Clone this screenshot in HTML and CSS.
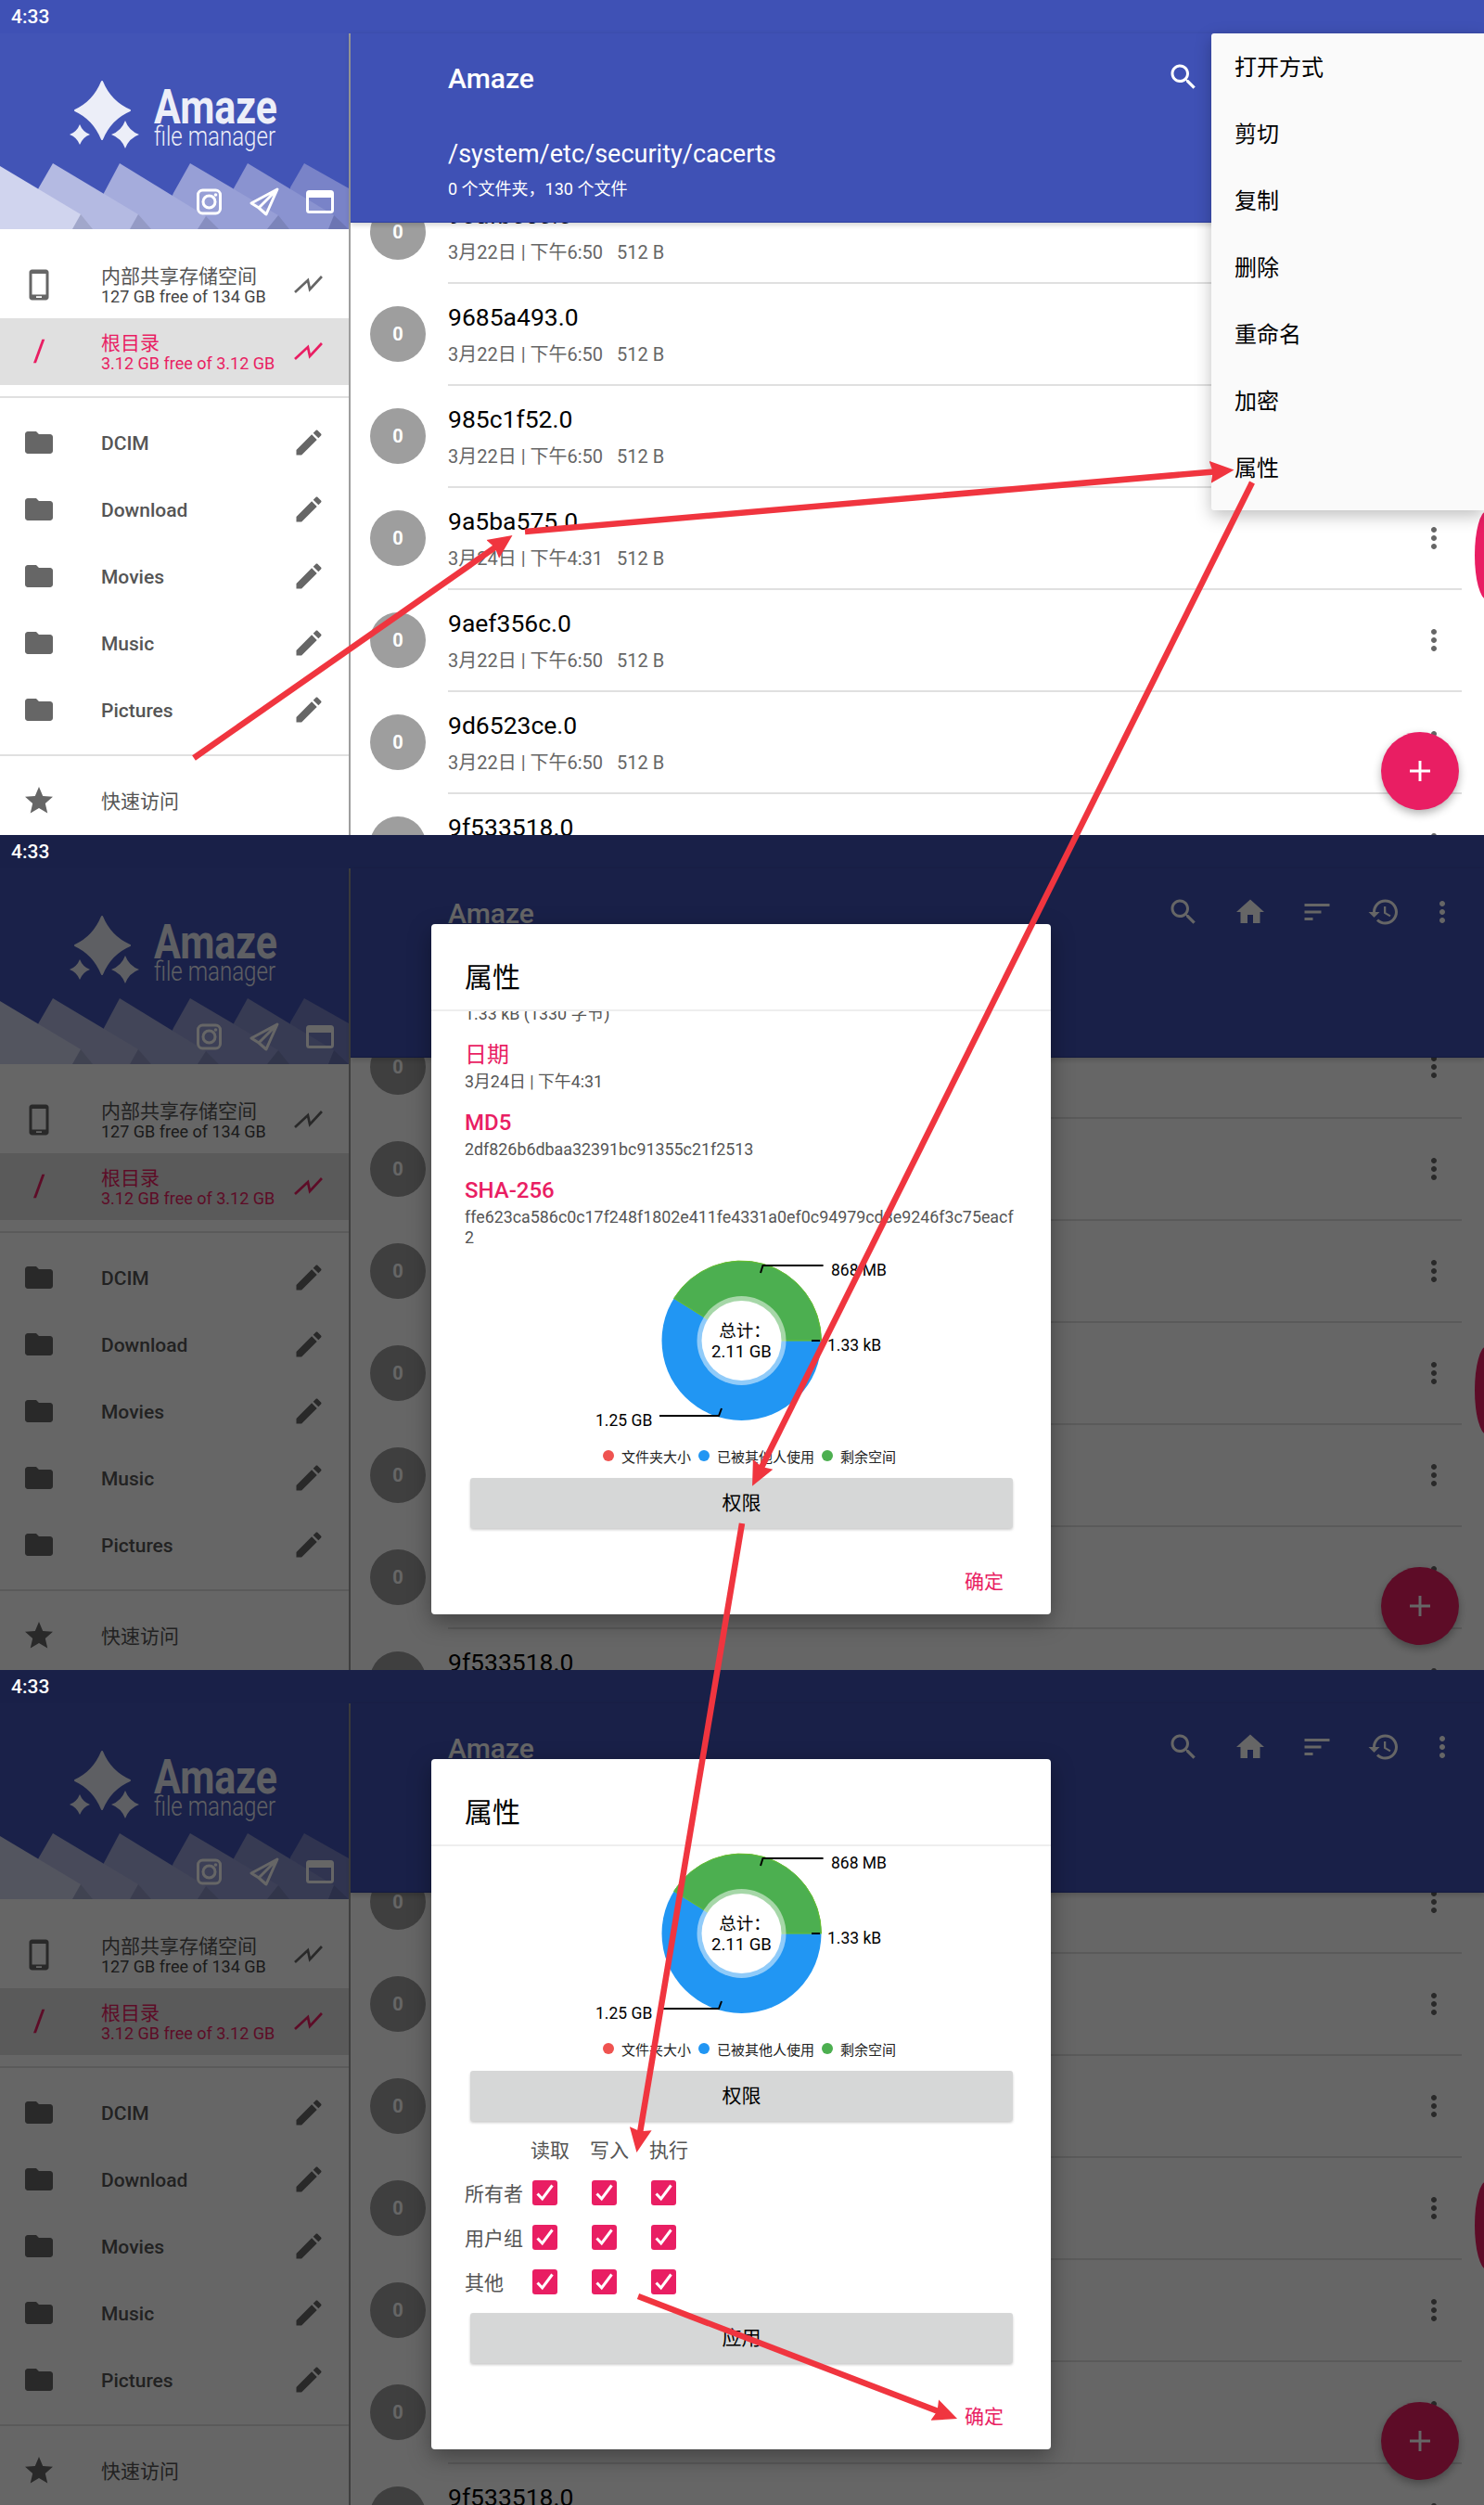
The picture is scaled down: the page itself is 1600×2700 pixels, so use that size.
FILE: index.html
```html
<!DOCTYPE html>
<html lang="zh-CN">
<head>
    <meta charset="UTF-8">
    <title>Amaze 文件属性</title>
    <link rel="stylesheet" href="styles.css">
</head>
<body>

<!-- iconos -->
<svg class="sprites" width="0" height="0">
    <symbol id="i-search" viewBox="0 0 24 24"><path d="M15.5 14h-.79l-.28-.27C15.41 12.59 16 11.11 16 9.5 16 5.91 13.09 3 9.5 3S3 5.91 3 9.5 5.91 16 9.5 16c1.61 0 3.09-.59 4.23-1.57l.27.28v.79l5 4.99L20.49 19l-4.99-5zm-6 0C7.01 14 5 11.99 5 9.5S7.01 5 9.5 5 14 7.01 14 9.5 11.99 14 9.5 14z"/></symbol>
    <symbol id="i-home" viewBox="0 0 24 24"><path d="M10 20v-6h4v6h5v-8h3L12 3 2 12h3v8z"/></symbol>
    <symbol id="i-sort" viewBox="0 0 24 24"><path d="M3 18h6v-2H3v2zM3 6v2h18V6H3zm0 7h12v-2H3v2z"/></symbol>
    <symbol id="i-history" viewBox="0 0 24 24"><path d="M13 3c-4.97 0-9 4.03-9 9H1l3.89 3.89.07.14L9 12H6c0-3.87 3.13-7 7-7s7 3.13 7 7-3.13 7-7 7c-1.93 0-3.68-.79-4.94-2.06l-1.42 1.42C8.27 19.99 10.51 21 13 21c4.97 0 9-4.03 9-9s-4.03-9-9-9zm-1 5v5l4.28 2.54.72-1.21-3.5-2.08V8H12z"/></symbol>
    <symbol id="i-dots" viewBox="0 0 24 24"><path d="M12 8c1.1 0 2-.9 2-2s-.9-2-2-2-2 .9-2 2 .9 2 2 2zm0 2c-1.1 0-2 .9-2 2s.9 2 2 2 2-.9 2-2-.9-2-2-2zm0 6c-1.1 0-2 .9-2 2s.9 2 2 2 2-.9 2-2-.9-2-2-2z"/></symbol>
    <symbol id="i-pencil" viewBox="0 0 24 24"><path d="M3 17.25V21h3.75L17.81 9.94l-3.75-3.75L3 17.25zM20.71 7.04c.39-.39.39-1.02 0-1.41l-2.34-2.34c-.39-.39-1.02-.39-1.41 0l-1.83 1.83 3.75 3.75 1.83-1.83z"/></symbol>
    <symbol id="i-folder" viewBox="0 0 24 24"><path d="M10 4H4c-1.1 0-1.99.9-1.99 2L2 18c0 1.1.9 2 2 2h16c1.1 0 2-.9 2-2V8c0-1.1-.9-2-2-2h-8l-2-2z"/></symbol>
    <symbol id="i-star" viewBox="0 0 24 24"><path d="M12 17.27L18.18 21l-1.64-7.03L22 9.24l-7.19-.61L12 2 9.19 8.63 2 9.24l5.46 4.73L5.82 21z"/></symbol>
    <symbol id="i-phone" viewBox="0 0 24 24"><path fill-rule="evenodd" d="M7 1h10c1.1 0 2 .9 2 2v18c0 1.1-.9 2-2 2H7c-1.1 0-2-.9-2-2V3c0-1.1.9-2 2-2zm0 3v15h10V4H7zm3 16.2v1.2h4v-1.2h-4z"/></symbol>
    <symbol id="i-chart" viewBox="0 0 24 24"><path d="M2 17.300L11.300 8.700L12.700 15.300L21.300 6" fill="none" stroke="currentColor" stroke-width="1.800"/></symbol>
    <symbol id="i-slash" viewBox="0 0 24 24"><path d="M8 20.200L14.200 3.200h2L10 20.200z"/></symbol>
    <symbol id="i-plus" viewBox="0 0 24 24"><path d="M10.400 0h3.200v10.400H24v3.200H13.600V24h-3.200V13.600H0v-3.200h10.400z"/></symbol>
    <symbol id="i-check" viewBox="0 0 27 27"><path d="M5.500 14.500l5.200 5.500L21.500 5.500" fill="none" stroke="#fff" stroke-width="3"/></symbol>
    <symbol id="drawer-art" viewBox="0 0 376 211">
        <path d="M313 166L328 140L376 167V211H310z" fill="#7983c8"/>
        <path d="M252 167L267 140L360 196L354 211H240z" fill="#8a93d0"/>
        <path d="M187 172L205 140L300 196L288 211H170z" fill="#979fd6"/>
        <path d="M112 172L129 140L222 197L213 211H100z" fill="#a5acdc"/>
        <path d="M42 166L57 140L149 195L140 211H20z" fill="#b4bae2"/>
        <path d="M0 143L87 195L78 211H0z" fill="#d0d4ee"/>
        <path d="M87 195L78 211H100zM149 195L140 211H163zM222 197L213 211H236zM300 196L288 211H312zM360 196L354 211H376z" fill="#000" opacity=".1"/>
        <path d="M110 52Q119 74 140 83Q119 92 110 114Q101 92 81 83Q101 74 110 52Z" fill="#eceef8" stroke="#eceef8" stroke-width="2" stroke-linejoin="round"/>
        <path d="M86 98Q89 106 97 109Q89 112 86 120Q83 112 75 109Q83 106 86 98Z" fill="#eceef8"/>
        <path d="M135 94Q139 105 150 109Q139 113 135 124Q131 113 120 109Q131 105 135 94Z" fill="#eceef8"/>
        <g fill="none" stroke="#fff" stroke-width="3" stroke-linejoin="round">
            <rect x="213.500" y="169" width="24" height="25" rx="5"/>
            <circle cx="225.500" cy="181.500" r="6.500"/>
            <path d="M299 168L271 183L279 188L299 168L287 195L279 188"/>
            <rect x="331.500" y="170.500" width="27" height="22" rx="2"/>
        </g>
        <circle cx="232.500" cy="174" r="1.800" fill="#fff"/>
        <rect x="331" y="170" width="28" height="7" fill="#fff"/>
    </symbol>
    <symbol id="donut" viewBox="0 0 668 206">
        <circle cx="334.500" cy="94" r="86" fill="#2196f3"/>
        <path d="M334.500 94L420.500 94A86 86 0 0 0 261.600 48.400Z" fill="#4caf50" stroke="#6cc02a" stroke-width="1"/>
        <circle cx="334.500" cy="94" r="48" fill="#fff" opacity=".5"/>
        <circle cx="334.500" cy="94" r="43" fill="#fff"/>
        <path d="M355 21L357.500 13H422.600M410 94H419M246 175H310L313 167" fill="none" stroke="#000" stroke-width="2"/>
    </symbol>
</svg>

<!-- pantalla 1: menu del archivo -->
<section class="screen">
    <div class="status"><span class="clock">4:33</span></div>
    <div class="panes">
        <aside class="drawer">
            <div class="drawer-head">
                <svg class="art"><use href="#drawer-art"/></svg>
                <svg class="logo" viewBox="0 0 376 211"><text class="logo-name" x="166" y="97" textLength="133" lengthAdjust="spacingAndGlyphs">Amaze</text><text class="logo-sub" x="166" y="121" textLength="131" lengthAdjust="spacingAndGlyphs">file manager</text></svg>
            </div>
            <div class="nav-group first">
                <div class="nav-item"><svg class="ico"><use href="#i-phone"/></svg><div class="nav-text"><div class="nav-name">内部共享存储空间</div><div class="nav-sub">127 GB free of 134 GB</div></div><svg class="ico"><use href="#i-chart"/></svg></div>
                <div class="nav-item active"><svg class="ico"><use href="#i-slash"/></svg><div class="nav-text"><div class="nav-name">根目录</div><div class="nav-sub">3.12 GB free of 3.12 GB</div></div><svg class="ico"><use href="#i-chart"/></svg></div>
            </div>
            <div class="nav-group">
                <div class="nav-item"><svg class="ico"><use href="#i-folder"/></svg><div class="nav-text nav-label">DCIM</div><svg class="ico"><use href="#i-pencil"/></svg></div>
                <div class="nav-item"><svg class="ico"><use href="#i-folder"/></svg><div class="nav-text nav-label">Download</div><svg class="ico"><use href="#i-pencil"/></svg></div>
                <div class="nav-item"><svg class="ico"><use href="#i-folder"/></svg><div class="nav-text nav-label">Movies</div><svg class="ico"><use href="#i-pencil"/></svg></div>
                <div class="nav-item"><svg class="ico"><use href="#i-folder"/></svg><div class="nav-text nav-label">Music</div><svg class="ico"><use href="#i-pencil"/></svg></div>
                <div class="nav-item"><svg class="ico"><use href="#i-folder"/></svg><div class="nav-text nav-label">Pictures</div><svg class="ico"><use href="#i-pencil"/></svg></div>
            </div>
            <div class="nav-group">
                <div class="nav-item"><svg class="ico"><use href="#i-star"/></svg><div class="nav-text nav-name">快速访问</div></div>
            </div>
        </aside>
        <div class="main">
            <header class="toolbar">
                <div class="toolbar-text">
                    <div class="app-title">Amaze</div>
                    <div class="path">/system/etc/security/cacerts</div>
                    <div class="counts">0 个文件夹，130 个文件</div>
                </div>
                <div class="actions">
                    <svg class="ico"><use href="#i-search"/></svg><svg class="ico"><use href="#i-home"/></svg><svg class="ico"><use href="#i-sort"/></svg><svg class="ico"><use href="#i-history"/></svg><svg class="ico more"><use href="#i-dots"/></svg>
                </div>
            </header>
            <div class="files">
                <div class="file"><div class="avatar">0</div><div class="file-info"><div class="file-text"><div class="file-name">90afb5c6.0</div><div class="file-meta"><span>3月22日 | 下午6:50</span><span>512 B</span></div></div><svg class="ico"><use href="#i-dots"/></svg></div></div>
                <div class="file"><div class="avatar">0</div><div class="file-info"><div class="file-text"><div class="file-name">9685a493.0</div><div class="file-meta"><span>3月22日 | 下午6:50</span><span>512 B</span></div></div><svg class="ico"><use href="#i-dots"/></svg></div></div>
                <div class="file"><div class="avatar">0</div><div class="file-info"><div class="file-text"><div class="file-name">985c1f52.0</div><div class="file-meta"><span>3月22日 | 下午6:50</span><span>512 B</span></div></div><svg class="ico"><use href="#i-dots"/></svg></div></div>
                <div class="file"><div class="avatar">0</div><div class="file-info"><div class="file-text"><div class="file-name">9a5ba575.0</div><div class="file-meta"><span>3月24日 | 下午4:31</span><span>512 B</span></div></div><svg class="ico"><use href="#i-dots"/></svg></div></div>
                <div class="file"><div class="avatar">0</div><div class="file-info"><div class="file-text"><div class="file-name">9aef356c.0</div><div class="file-meta"><span>3月22日 | 下午6:50</span><span>512 B</span></div></div><svg class="ico"><use href="#i-dots"/></svg></div></div>
                <div class="file"><div class="avatar">0</div><div class="file-info"><div class="file-text"><div class="file-name">9d6523ce.0</div><div class="file-meta"><span>3月22日 | 下午6:50</span><span>512 B</span></div></div><svg class="ico"><use href="#i-dots"/></svg></div></div>
                <div class="file"><div class="avatar">0</div><div class="file-info"><div class="file-text"><div class="file-name">9f533518.0</div><div class="file-meta"><span>3月22日 | 下午6:50</span><span>512 B</span></div></div><svg class="ico"><use href="#i-dots"/></svg></div></div>
            </div>
        </div>
    </div>
    <div class="scroll-thumb"></div>
    <div class="fab"><svg class="plus"><use href="#i-plus"/></svg></div>
    <div class="menu">
        <div class="menu-item">打开方式</div>
        <div class="menu-item">剪切</div>
        <div class="menu-item">复制</div>
        <div class="menu-item">删除</div>
        <div class="menu-item">重命名</div>
        <div class="menu-item">加密</div>
        <div class="menu-item">属性</div>
    </div>
</section>

<!-- pantalla 2: dialogo de propiedades -->
<section class="screen">
    <div class="status"><span class="clock">4:33</span></div>
    <div class="panes">
        <aside class="drawer">
            <div class="drawer-head">
                <svg class="art"><use href="#drawer-art"/></svg>
                <svg class="logo" viewBox="0 0 376 211"><text class="logo-name" x="166" y="97" textLength="133" lengthAdjust="spacingAndGlyphs">Amaze</text><text class="logo-sub" x="166" y="121" textLength="131" lengthAdjust="spacingAndGlyphs">file manager</text></svg>
            </div>
            <div class="nav-group first">
                <div class="nav-item"><svg class="ico"><use href="#i-phone"/></svg><div class="nav-text"><div class="nav-name">内部共享存储空间</div><div class="nav-sub">127 GB free of 134 GB</div></div><svg class="ico"><use href="#i-chart"/></svg></div>
                <div class="nav-item active"><svg class="ico"><use href="#i-slash"/></svg><div class="nav-text"><div class="nav-name">根目录</div><div class="nav-sub">3.12 GB free of 3.12 GB</div></div><svg class="ico"><use href="#i-chart"/></svg></div>
            </div>
            <div class="nav-group">
                <div class="nav-item"><svg class="ico"><use href="#i-folder"/></svg><div class="nav-text nav-label">DCIM</div><svg class="ico"><use href="#i-pencil"/></svg></div>
                <div class="nav-item"><svg class="ico"><use href="#i-folder"/></svg><div class="nav-text nav-label">Download</div><svg class="ico"><use href="#i-pencil"/></svg></div>
                <div class="nav-item"><svg class="ico"><use href="#i-folder"/></svg><div class="nav-text nav-label">Movies</div><svg class="ico"><use href="#i-pencil"/></svg></div>
                <div class="nav-item"><svg class="ico"><use href="#i-folder"/></svg><div class="nav-text nav-label">Music</div><svg class="ico"><use href="#i-pencil"/></svg></div>
                <div class="nav-item"><svg class="ico"><use href="#i-folder"/></svg><div class="nav-text nav-label">Pictures</div><svg class="ico"><use href="#i-pencil"/></svg></div>
            </div>
            <div class="nav-group">
                <div class="nav-item"><svg class="ico"><use href="#i-star"/></svg><div class="nav-text nav-name">快速访问</div></div>
            </div>
        </aside>
        <div class="main">
            <header class="toolbar">
                <div class="toolbar-text">
                    <div class="app-title">Amaze</div>
                    <div class="path">/system/etc/security/cacerts</div>
                    <div class="counts">0 个文件夹，130 个文件</div>
                </div>
                <div class="actions">
                    <svg class="ico"><use href="#i-search"/></svg><svg class="ico"><use href="#i-home"/></svg><svg class="ico"><use href="#i-sort"/></svg><svg class="ico"><use href="#i-history"/></svg><svg class="ico more"><use href="#i-dots"/></svg>
                </div>
            </header>
            <div class="files">
                <div class="file"><div class="avatar">0</div><div class="file-info"><div class="file-text"><div class="file-name">90afb5c6.0</div><div class="file-meta"><span>3月22日 | 下午6:50</span><span>512 B</span></div></div><svg class="ico"><use href="#i-dots"/></svg></div></div>
                <div class="file"><div class="avatar">0</div><div class="file-info"><div class="file-text"><div class="file-name">9685a493.0</div><div class="file-meta"><span>3月22日 | 下午6:50</span><span>512 B</span></div></div><svg class="ico"><use href="#i-dots"/></svg></div></div>
                <div class="file"><div class="avatar">0</div><div class="file-info"><div class="file-text"><div class="file-name">985c1f52.0</div><div class="file-meta"><span>3月22日 | 下午6:50</span><span>512 B</span></div></div><svg class="ico"><use href="#i-dots"/></svg></div></div>
                <div class="file"><div class="avatar">0</div><div class="file-info"><div class="file-text"><div class="file-name">9a5ba575.0</div><div class="file-meta"><span>3月24日 | 下午4:31</span><span>512 B</span></div></div><svg class="ico"><use href="#i-dots"/></svg></div></div>
                <div class="file"><div class="avatar">0</div><div class="file-info"><div class="file-text"><div class="file-name">9aef356c.0</div><div class="file-meta"><span>3月22日 | 下午6:50</span><span>512 B</span></div></div><svg class="ico"><use href="#i-dots"/></svg></div></div>
                <div class="file"><div class="avatar">0</div><div class="file-info"><div class="file-text"><div class="file-name">9d6523ce.0</div><div class="file-meta"><span>3月22日 | 下午6:50</span><span>512 B</span></div></div><svg class="ico"><use href="#i-dots"/></svg></div></div>
                <div class="file"><div class="avatar">0</div><div class="file-info"><div class="file-text"><div class="file-name">9f533518.0</div><div class="file-meta"><span>3月22日 | 下午6:50</span><span>512 B</span></div></div><svg class="ico"><use href="#i-dots"/></svg></div></div>
            </div>
        </div>
    </div>
    <div class="scroll-thumb"></div>
    <div class="fab"><svg class="plus"><use href="#i-plus"/></svg></div>
    <div class="scrim"></div>
    <div class="dialog">
        <div class="dialog-title">属性</div>
        <div class="dialog-body">
            <div class="prop-value cut">1.33 kB (1330 字节)</div>
            <div class="prop-label">日期</div>
            <div class="prop-value">3月24日 | 下午4:31</div>
            <div class="prop-label strong">MD5</div>
            <div class="prop-value">2df826b6dbaa32391bc91355c21f2513</div>
            <div class="prop-label strong">SHA-256</div>
            <div class="prop-value">ffe623ca586c0c17f248f1802e411fe4331a0ef0c94979cd8e9246f3c75eacf<br>2</div>
            <div class="chart scrolled">
                <svg class="donut"><use href="#donut"/></svg>
                <svg class="chart-labels" viewBox="0 0 668 206"><text x="431" y="24">868 MB</text><text x="427" y="105">1.33 kB</text><text x="177" y="186">1.25 GB</text><text class="total" x="338" y="90" text-anchor="middle">总计：</text><text class="total" x="334.500" y="112" text-anchor="middle">2.11 GB</text></svg>
            </div>
            <div class="legend"><i class="dot red"></i><span>文件夹大小</span><i class="dot blue"></i><span>已被其他人使用</span><i class="dot green"></i><span>剩余空间</span></div>
            <div class="btn">权限</div>
        </div>
        <div class="dialog-foot">确定</div>
    </div>
</section>

<!-- pantalla 3: permisos -->
<section class="screen">
    <div class="status"><span class="clock">4:33</span></div>
    <div class="panes">
        <aside class="drawer">
            <div class="drawer-head">
                <svg class="art"><use href="#drawer-art"/></svg>
                <svg class="logo" viewBox="0 0 376 211"><text class="logo-name" x="166" y="97" textLength="133" lengthAdjust="spacingAndGlyphs">Amaze</text><text class="logo-sub" x="166" y="121" textLength="131" lengthAdjust="spacingAndGlyphs">file manager</text></svg>
            </div>
            <div class="nav-group first">
                <div class="nav-item"><svg class="ico"><use href="#i-phone"/></svg><div class="nav-text"><div class="nav-name">内部共享存储空间</div><div class="nav-sub">127 GB free of 134 GB</div></div><svg class="ico"><use href="#i-chart"/></svg></div>
                <div class="nav-item active"><svg class="ico"><use href="#i-slash"/></svg><div class="nav-text"><div class="nav-name">根目录</div><div class="nav-sub">3.12 GB free of 3.12 GB</div></div><svg class="ico"><use href="#i-chart"/></svg></div>
            </div>
            <div class="nav-group">
                <div class="nav-item"><svg class="ico"><use href="#i-folder"/></svg><div class="nav-text nav-label">DCIM</div><svg class="ico"><use href="#i-pencil"/></svg></div>
                <div class="nav-item"><svg class="ico"><use href="#i-folder"/></svg><div class="nav-text nav-label">Download</div><svg class="ico"><use href="#i-pencil"/></svg></div>
                <div class="nav-item"><svg class="ico"><use href="#i-folder"/></svg><div class="nav-text nav-label">Movies</div><svg class="ico"><use href="#i-pencil"/></svg></div>
                <div class="nav-item"><svg class="ico"><use href="#i-folder"/></svg><div class="nav-text nav-label">Music</div><svg class="ico"><use href="#i-pencil"/></svg></div>
                <div class="nav-item"><svg class="ico"><use href="#i-folder"/></svg><div class="nav-text nav-label">Pictures</div><svg class="ico"><use href="#i-pencil"/></svg></div>
            </div>
            <div class="nav-group">
                <div class="nav-item"><svg class="ico"><use href="#i-star"/></svg><div class="nav-text nav-name">快速访问</div></div>
            </div>
        </aside>
        <div class="main">
            <header class="toolbar">
                <div class="toolbar-text">
                    <div class="app-title">Amaze</div>
                    <div class="path">/system/etc/security/cacerts</div>
                    <div class="counts">0 个文件夹，130 个文件</div>
                </div>
                <div class="actions">
                    <svg class="ico"><use href="#i-search"/></svg><svg class="ico"><use href="#i-home"/></svg><svg class="ico"><use href="#i-sort"/></svg><svg class="ico"><use href="#i-history"/></svg><svg class="ico more"><use href="#i-dots"/></svg>
                </div>
            </header>
            <div class="files">
                <div class="file"><div class="avatar">0</div><div class="file-info"><div class="file-text"><div class="file-name">90afb5c6.0</div><div class="file-meta"><span>3月22日 | 下午6:50</span><span>512 B</span></div></div><svg class="ico"><use href="#i-dots"/></svg></div></div>
                <div class="file"><div class="avatar">0</div><div class="file-info"><div class="file-text"><div class="file-name">9685a493.0</div><div class="file-meta"><span>3月22日 | 下午6:50</span><span>512 B</span></div></div><svg class="ico"><use href="#i-dots"/></svg></div></div>
                <div class="file"><div class="avatar">0</div><div class="file-info"><div class="file-text"><div class="file-name">985c1f52.0</div><div class="file-meta"><span>3月22日 | 下午6:50</span><span>512 B</span></div></div><svg class="ico"><use href="#i-dots"/></svg></div></div>
                <div class="file"><div class="avatar">0</div><div class="file-info"><div class="file-text"><div class="file-name">9a5ba575.0</div><div class="file-meta"><span>3月24日 | 下午4:31</span><span>512 B</span></div></div><svg class="ico"><use href="#i-dots"/></svg></div></div>
                <div class="file"><div class="avatar">0</div><div class="file-info"><div class="file-text"><div class="file-name">9aef356c.0</div><div class="file-meta"><span>3月22日 | 下午6:50</span><span>512 B</span></div></div><svg class="ico"><use href="#i-dots"/></svg></div></div>
                <div class="file"><div class="avatar">0</div><div class="file-info"><div class="file-text"><div class="file-name">9d6523ce.0</div><div class="file-meta"><span>3月22日 | 下午6:50</span><span>512 B</span></div></div><svg class="ico"><use href="#i-dots"/></svg></div></div>
                <div class="file"><div class="avatar">0</div><div class="file-info"><div class="file-text"><div class="file-name">9f533518.0</div><div class="file-meta"><span>3月22日 | 下午6:50</span><span>512 B</span></div></div><svg class="ico"><use href="#i-dots"/></svg></div></div>
            </div>
        </div>
    </div>
    <div class="scroll-thumb"></div>
    <div class="fab"><svg class="plus"><use href="#i-plus"/></svg></div>
    <div class="scrim"></div>
    <div class="dialog">
        <div class="dialog-title">属性</div>
        <div class="dialog-body">
            <div class="chart">
                <svg class="donut"><use href="#donut"/></svg>
                <svg class="chart-labels" viewBox="0 0 668 206"><text x="431" y="24">868 MB</text><text x="427" y="105">1.33 kB</text><text x="177" y="186">1.25 GB</text><text class="total" x="338" y="90" text-anchor="middle">总计：</text><text class="total" x="334.500" y="112" text-anchor="middle">2.11 GB</text></svg>
            </div>
            <div class="legend"><i class="dot red"></i><span>文件夹大小</span><i class="dot blue"></i><span>已被其他人使用</span><i class="dot green"></i><span>剩余空间</span></div>
            <div class="btn">权限</div>
            <div class="perms">
                <span></span><span class="perm-head">读取</span><span class="perm-head">写入</span><span class="perm-head">执行</span>
                <span class="perm-name">所有者</span><span class="check"><svg><use href="#i-check"/></svg></span><span class="check"><svg><use href="#i-check"/></svg></span><span class="check"><svg><use href="#i-check"/></svg></span>
                <span class="perm-name">用户组</span><span class="check"><svg><use href="#i-check"/></svg></span><span class="check"><svg><use href="#i-check"/></svg></span><span class="check"><svg><use href="#i-check"/></svg></span>
                <span class="perm-name">其他</span><span class="check"><svg><use href="#i-check"/></svg></span><span class="check"><svg><use href="#i-check"/></svg></span><span class="check"><svg><use href="#i-check"/></svg></span>
            </div>
            <div class="btn">应用</div>
        </div>
        <div class="dialog-foot">确定</div>
    </div>
</section>

<!-- flechas rojas de la anotacion -->
<svg class="arrows" viewBox="0 0 1600 2700">
    <defs>
        <marker id="head" markerUnits="userSpaceOnUse" markerWidth="26" markerHeight="26" viewBox="0 0 26 26" refX="16" refY="13" orient="auto">
            <path d="M0 1L26 13L0 25L3 13z" fill="#f0353f"/>
        </marker>
    </defs>
    <g stroke="#f0353f" stroke-width="6.500">
        <line x1="209" y1="817" x2="544.300" y2="582.700" marker-end="url(#head)"/>
        <line x1="566" y1="573" x2="1320.600" y2="507.400" marker-end="url(#head)"/>
        <line x1="1350" y1="520" x2="815.500" y2="1592.700" marker-end="url(#head)"/>
        <line x1="800" y1="1642" x2="688.100" y2="2310.100" marker-end="url(#head)"/>
        <line x1="688" y1="2475" x2="1022.700" y2="2603.400" marker-end="url(#head)"/>
    </g>
</svg>

</body>
</html>
```

FILE: styles.css
```css
/* Estilos generales */
body {
    margin: 0;
    width: 1600px;
    position: relative;
    font-family: Roboto, "Noto Sans CJK SC", sans-serif;
    background-color: #fff;
    color: #000;
}

.sprites {
    position: absolute;
}

.screen {
    height: 900px;
    position: relative;
    overflow: hidden;
    display: flex;
    flex-direction: column;
    background-color: #3f51b5;
}

.status {
    height: 36px;
    flex: none;
    padding-left: 12px;
    line-height: 36px;
}

.clock {
    position: relative;
    z-index: 6;
    color: #fff;
    font-size: 21px;
    font-weight: 500;
}

.panes {
    flex: 1;
    min-height: 0;
    display: flex;
    background-color: #fff;
}

.ico {
    width: 36px;
    height: 36px;
    flex: none;
    fill: #666;
    color: #666;
}

/* Panel lateral */
.drawer {
    width: 376px;
    flex: none;
    border-right: 2px solid #9e9e9e;
}

.drawer-head {
    height: 211px;
    position: relative;
    background-color: #4254b6;
}

.art, .logo {
    width: 376px;
    height: 211px;
    display: block;
}

.logo {
    position: absolute;
    left: 0;
    top: 0;
}

.logo-name {
    font-size: 52px;
    font-weight: 700;
    fill: #eceef8;
}

.logo-sub {
    font-size: 30px;
    font-weight: 300;
    fill: #eceef8;
}

.nav-group {
    padding: 12px 0;
    border-top: 2px solid #e0e0e0;
}

.nav-group.first {
    padding-top: 24px;
    border-top: 0;
}

.nav-item {
    height: 72px;
    display: flex;
    align-items: center;
    padding: 0 25px 0 24px;
}

.nav-text {
    flex: 1;
    margin-left: 49px;
    padding-top: 2px;
    color: #555;
}

.nav-name {
    font-size: 21px;
    line-height: 24px;
}

.nav-sub {
    font-size: 18px;
    line-height: 20px;
    color: #444;
}

.nav-label {
    font-size: 21px;
    font-weight: 500;
}

.nav-item.active {
    background-color: #e0e0e0;
}

.nav-item.active .nav-text, .nav-item.active .nav-sub {
    color: #e91e63;
}

.nav-item.active .ico {
    fill: #e91e63;
    color: #e91e63;
}

/* Barra y lista de archivos */
.main {
    flex: 1;
    min-width: 0;
}

.toolbar {
    height: 204px;
    box-sizing: border-box;
    position: relative;
    z-index: 1;
    display: flex;
    padding: 29px 27px 0 105px;
    background-color: #3f51b5;
    border-bottom: 1px solid #2d3f9f;
    box-shadow: 0 2px 6px rgba(0, 0, 0, 0.2);
    color: #fff;
}

.toolbar-text {
    flex: 1;
}

.app-title {
    font-size: 30px;
    font-weight: 500;
    line-height: 40px;
}

.path {
    margin-top: 43px;
    font-size: 27px;
    line-height: 36px;
}

.counts {
    margin-top: 8px;
    font-size: 18px;
    line-height: 24px;
}

.actions {
    display: flex;
    gap: 36px;
    height: 36px;
}

.actions .ico {
    fill: #fff;
}

.actions .more {
    margin-left: -9px;
}

.files {
    margin-top: -45px;
}

.file {
    height: 110px;
    display: flex;
    align-items: center;
    padding-left: 21px;
}

.avatar {
    width: 60px;
    height: 60px;
    flex: none;
    border-radius: 50%;
    background-color: #9e9e9e;
    color: #fff;
    font-size: 20px;
    font-weight: 700;
    line-height: 60px;
    text-align: center;
}

.file-info {
    flex: 1;
    height: 111px;
    align-self: flex-start;
    box-sizing: border-box;
    margin: 0 24px;
    padding-right: 12px;
    display: flex;
    align-items: center;
    border-bottom: 2px solid #e0e0e0;
}

.file-text {
    flex: 1;
    padding-top: 2px;
}

.file-name {
    font-size: 26.500px;
    line-height: 34px;
    margin-top: -2px;
}

.file-meta {
    display: flex;
    gap: 15px;
    margin-top: 10px;
    font-size: 20px;
    line-height: 26px;
    color: #666;
}

.scroll-thumb {
    position: absolute;
    left: 1590px;
    top: 551px;
    width: 26px;
    height: 95px;
    z-index: 2;
    border-radius: 50%;
    background-color: #e91e63;
}

.fab {
    position: absolute;
    left: 1489px;
    top: 789px;
    width: 84px;
    height: 84px;
    z-index: 2;
    display: flex;
    align-items: center;
    justify-content: center;
    border-radius: 50%;
    background-color: #e91e63;
    box-shadow: 0 4px 10px rgba(0, 0, 0, 0.3);
}

.plus {
    width: 22px;
    height: 22px;
    fill: #fff;
}

/* Menu contextual */
.menu {
    position: absolute;
    left: 1306px;
    right: 0;
    top: 36px;
    z-index: 3;
    padding-bottom: 10px;
    border-radius: 3px 0 0 3px;
    background-color: #fafafa;
    box-shadow: 0 6px 18px rgba(0, 0, 0, 0.25);
}

.menu-item {
    height: 72px;
    padding-left: 25px;
    font-size: 24px;
    line-height: 74px;
}

/* Dialogo */
.scrim {
    position: absolute;
    inset: 0;
    z-index: 5;
    background-color: rgba(0, 0, 0, 0.6);
}

.dialog {
    position: absolute;
    left: 465px;
    top: 96px;
    width: 668px;
    height: 744px;
    z-index: 6;
    display: flex;
    flex-direction: column;
    border-radius: 4px;
    background-color: #fff;
    box-shadow: 0 8px 24px rgba(0, 0, 0, 0.35);
}

.dialog-title {
    height: 92px;
    flex: none;
    box-sizing: content-box;
    padding-left: 36px;
    border-bottom: 2px solid #eee;
    font-size: 30px;
    line-height: 116px;
}

.dialog-body {
    flex: 1;
    min-height: 0;
    overflow: hidden;
    padding: 0 36px;
}

.prop-label {
    margin-top: 18px;
    color: #e91e63;
    font-size: 24px;
    line-height: 30px;
}

.prop-label.strong {
    font-weight: 500;
}

.prop-value {
    margin-top: 3px;
    color: #555;
    font-size: 17.850px;
    line-height: 22px;
    white-space: nowrap;
}

.prop-value.cut {
    margin-top: -8px;
}

.chart {
    height: 206px;
    margin: 0 -36px;
    position: relative;
}

.chart.scrolled {
    margin-top: 6px;
}

.donut, .chart-labels {
    width: 668px;
    height: 206px;
    display: block;
}

.chart-labels {
    position: absolute;
    left: 0;
    top: 0;
    font-size: 17.500px;
}

.chart-labels .total {
    font-size: 18.500px;
}

.legend {
    height: 24px;
    display: flex;
    align-items: center;
    padding-left: 149px;
    font-size: 15px;
    color: #222;
}

.legend span {
    margin: 0 8px 0 8px;
}

.dot {
    width: 12px;
    height: 12px;
    flex: none;
    border-radius: 50%;
}

.dot.red {
    background-color: #ef5350;
}

.dot.blue {
    background-color: #2196f3;
}

.dot.green {
    background-color: #4caf50;
}

.btn {
    height: 54px;
    margin: 12px 5px 0 6px;
    border-radius: 3px;
    background-color: #d6d7d7;
    box-shadow: 0 2px 3px rgba(0, 0, 0, 0.2);
    font-size: 21px;
    line-height: 54px;
    text-align: center;
}

.perms {
    display: grid;
    grid-template-columns: 73px repeat(3, 64px);
    grid-template-rows: 46px repeat(3, 48px);
    align-items: center;
    margin-top: 7px;
    font-size: 21px;
    color: #555;
}

.perm-head {
    margin-left: -2px;
}

.perms + .btn {
    margin-top: 10px;
}

.check {
    width: 27px;
    height: 27px;
    border-radius: 3px;
    background-color: #e91e63;
}

.check svg {
    width: 27px;
    height: 27px;
    display: block;
}

.dialog-foot {
    flex: none;
    height: 24px;
    padding: 0 51px 23px 0;
    color: #e91e63;
    font-size: 21px;
    line-height: 24px;
    text-align: right;
}

.arrows {
    position: absolute;
    left: 0;
    top: 0;
    width: 1600px;
    height: 2700px;
    z-index: 10;
}
```
